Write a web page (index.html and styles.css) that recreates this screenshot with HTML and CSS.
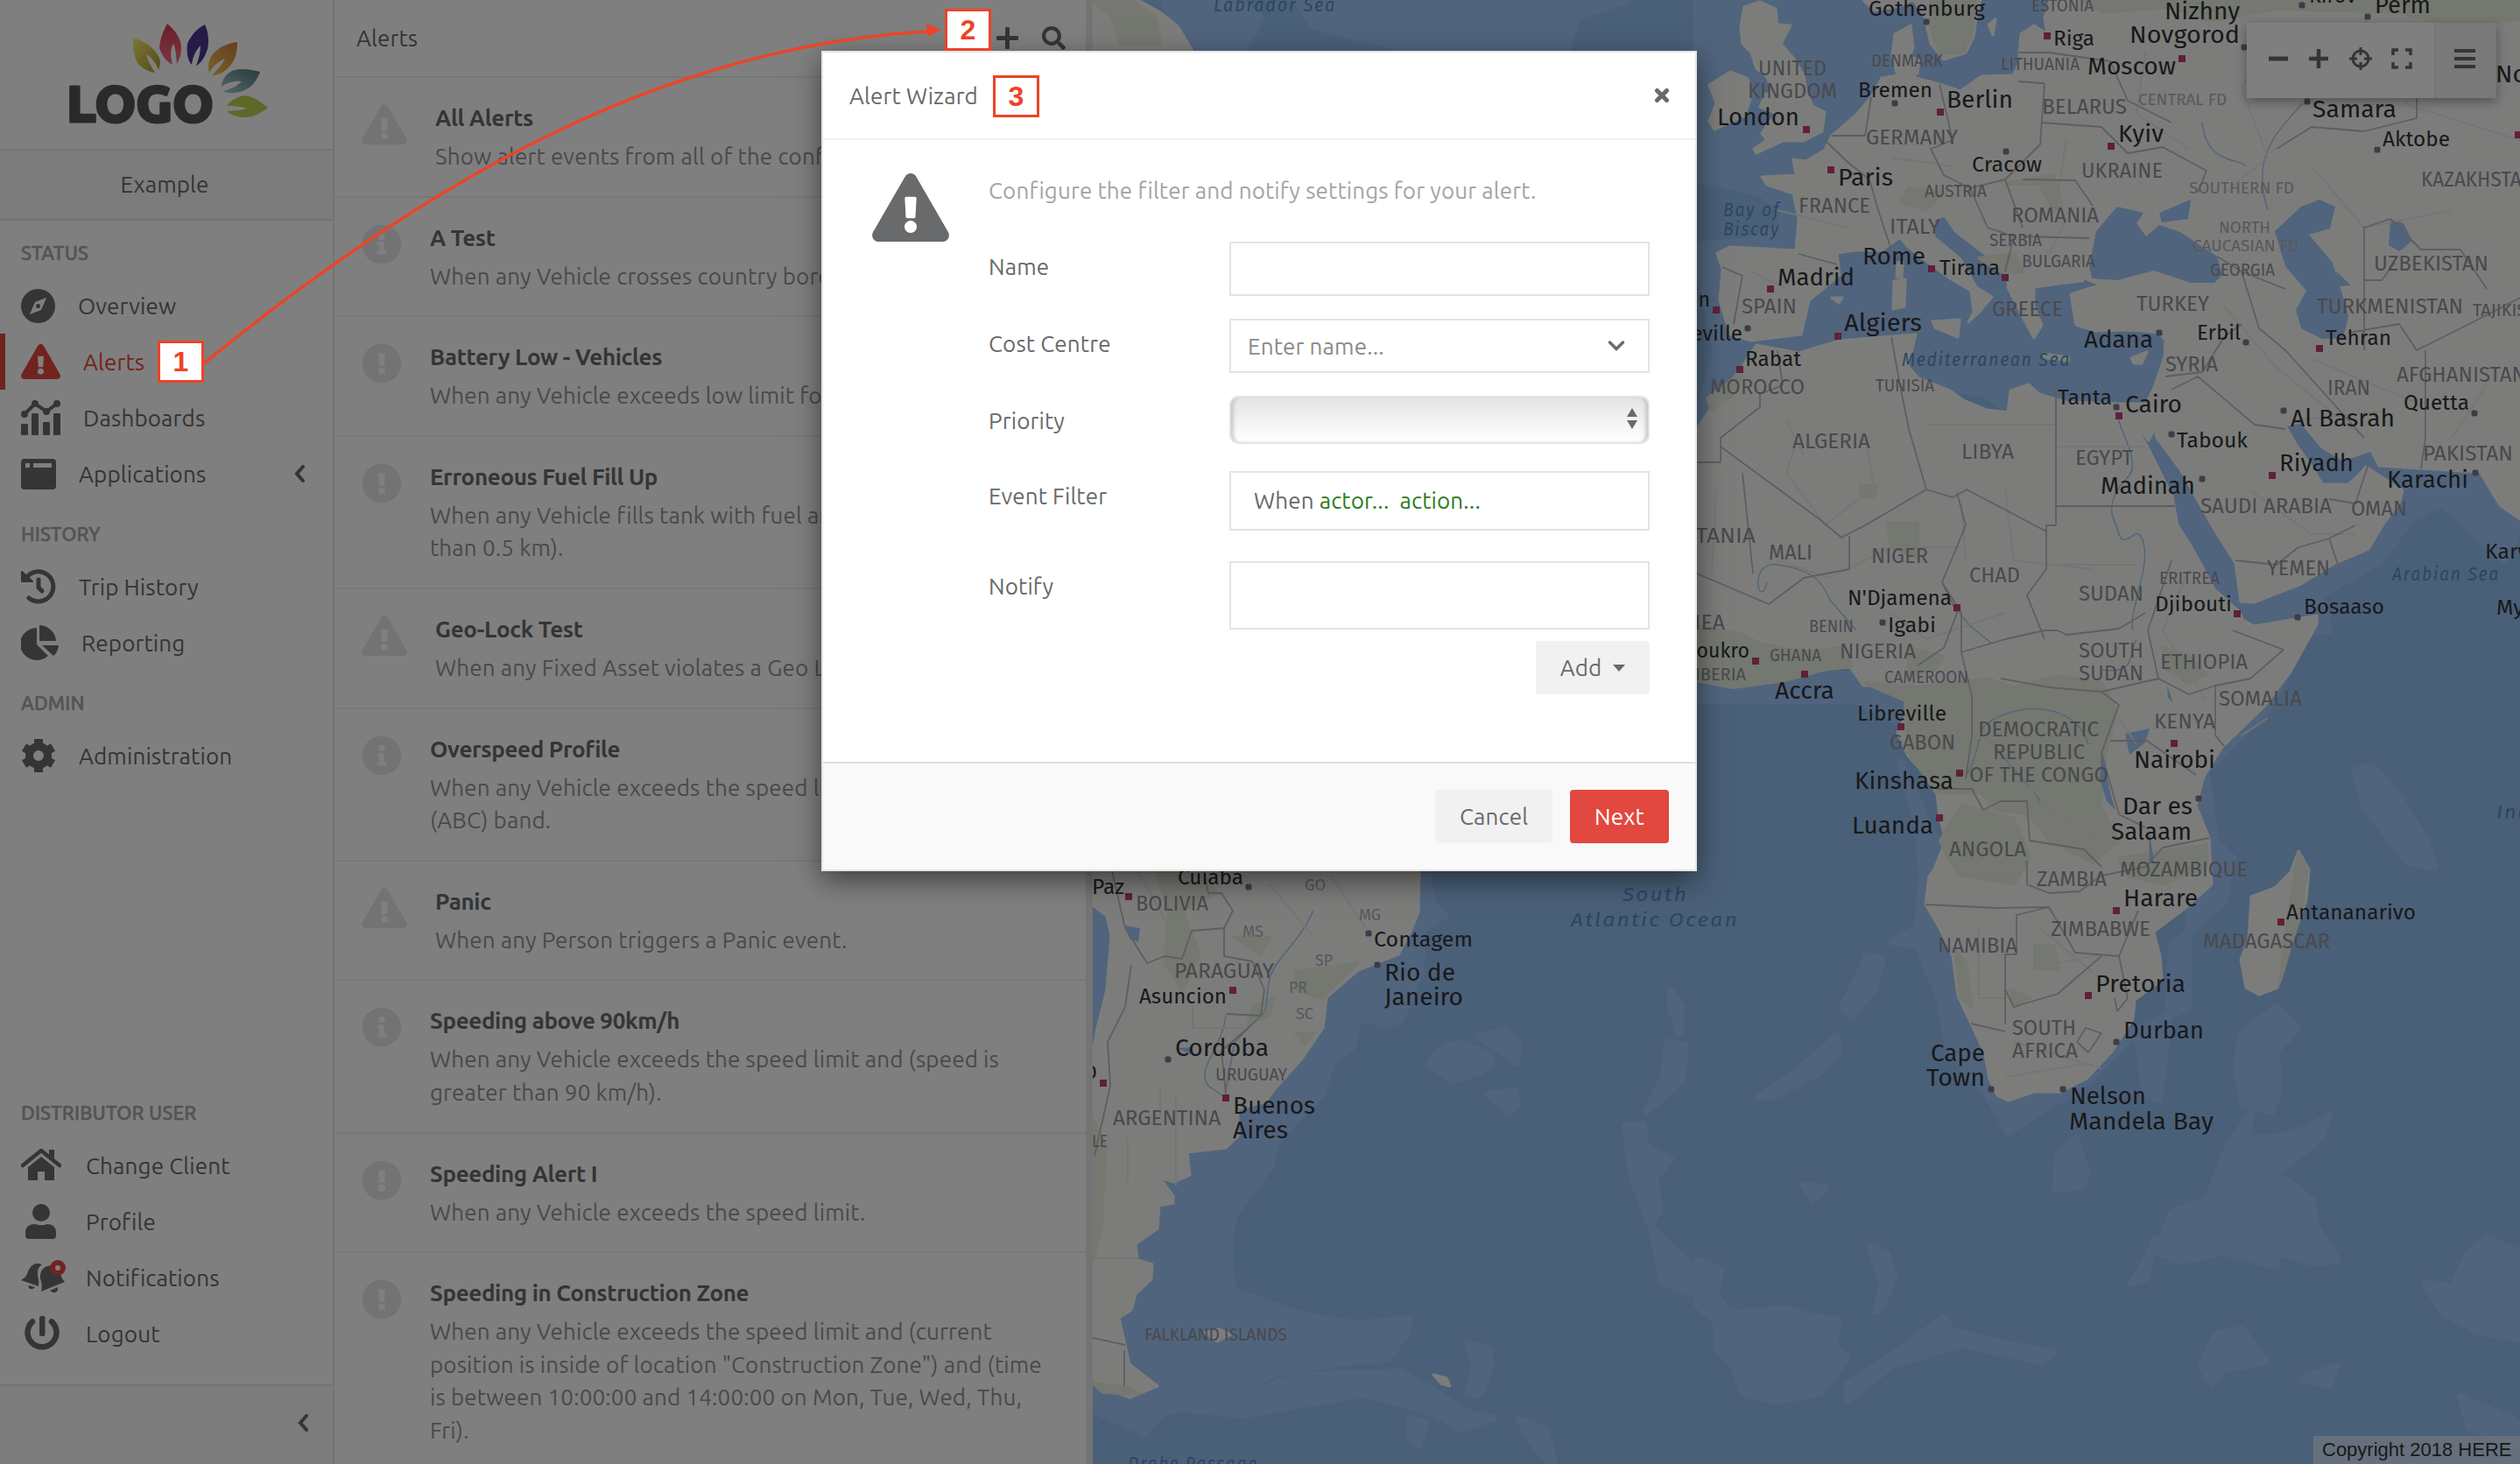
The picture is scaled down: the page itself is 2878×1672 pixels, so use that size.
FILE: index.html
```html
<!DOCTYPE html>
<html lang="en">
<head>
  <meta charset="UTF-8">
  <meta name="viewport" content="width=device-width, initial-scale=1.0">
  <title>Alerts</title>
  <link rel="stylesheet" href="styles.css">
</head>
<body>
  <svg class="sprite">
    <symbol id="i-warn" viewBox="0 0 576 512"><path d="M569.517 440.013C587.975 472.007 564.806 512 527.94 512H48.054c-36.937 0-59.999-40.055-41.577-71.987L246.423 23.985c18.467-32.009 64.72-31.951 83.154 0l239.94 416.028zM288 354c-25.405 0-46 20.595-46 46s20.595 46 46 46 46-20.595 46-46-20.595-46-46-46zm-43.673-165.346l7.418 136c.347 6.364 5.609 11.346 11.982 11.346h48.546c6.373 0 11.635-4.982 11.982-11.346l7.418-136c.375-6.874-5.098-12.654-11.982-12.654h-63.383c-6.884 0-12.356 5.78-11.981 12.654z"/></symbol>
    <symbol id="i-info" viewBox="0 0 512 512"><path d="M256 8C119.043 8 8 119.083 8 256c0 136.997 111.043 248 248 248s248-111.003 248-248C504 119.083 392.957 8 256 8zm0 110c23.196 0 42 18.804 42 42s-18.804 42-42 42-42-18.804-42-42 18.804-42 42-42zm56 254c0 6.627-5.373 12-12 12h-88c-6.627 0-12-5.373-12-12v-24c0-6.627 5.373-12 12-12h12v-64h-12c-6.627 0-12-5.373-12-12v-24c0-6.627 5.373-12 12-12h64c6.627 0 12 5.373 12 12v100h12c6.627 0 12 5.373 12 12v24z"/></symbol>
    <symbol id="i-excl" viewBox="0 0 512 512"><path d="M504 256c0 136.997-111.043 248-248 248S8 392.997 8 256C8 119.083 119.043 8 256 8s248 111.083 248 248zm-248 50c-25.405 0-46 20.595-46 46s20.595 46 46 46 46-20.595 46-46-20.595-46-46-46zm-43.673-165.346l7.418 136c.347 6.364 5.609 11.346 11.982 11.346h48.546c6.373 0 11.635-4.982 11.982-11.346l7.418-136c.375-6.874-5.098-12.654-11.982-12.654h-63.383c-6.884 0-12.356 5.78-11.981 12.654z"/></symbol>
    <symbol id="i-search" viewBox="0 0 512 512"><path d="M505 442.7L405.3 343c-4.5-4.5-10.6-7-17-7H372c27.6-35.3 44-79.7 44-128C416 93.1 322.9 0 208 0S0 93.1 0 208s93.1 208 208 208c48.3 0 92.7-16.4 128-44v16.3c0 6.4 2.5 12.5 7 17l99.7 99.7c9.4 9.4 24.6 9.4 33.9 0l28.3-28.3c9.4-9.4 9.4-24.6.1-34zM208 336c-70.7 0-128-57.2-128-128 0-70.7 57.2-128 128-128 70.7 0 128 57.2 128 128 0 70.7-57.2 128-128 128z"/></symbol>
    <symbol id="i-left" viewBox="0 0 12 20"><path d="M10 2 L3 10 L10 18" fill="none" stroke="currentColor" stroke-width="4" stroke-linecap="round"/></symbol>
  </svg>

  <div class="app">
    <nav class="sidebar">
      <div class="logo">
        <svg width="380" height="170" viewBox="0 0 380 170">
          <defs>
            <linearGradient id="g1" x2="1" y2="1"><stop offset="0" stop-color="#fbee72"/><stop offset="1" stop-color="#a3982c"/></linearGradient>
            <linearGradient id="g2" x2="0" y2="1"><stop offset="0" stop-color="#d43c4c"/><stop offset="1" stop-color="#fa6c8a"/></linearGradient>
            <linearGradient id="g4" x1="1" x2="0" y2="1"><stop offset="0" stop-color="#d07a3c"/><stop offset="1" stop-color="#e6c850"/></linearGradient>
            <linearGradient id="g5" x1="1" x2="0" y2="1"><stop offset="0" stop-color="#547474"/><stop offset="1" stop-color="#a4ccd6"/></linearGradient>
          </defs>
          <path fill="url(#g1)" d="M152 43C170 48 184 62 183 73L181 80C178 72 172 64 167 62C169 70 173 77 177 83C168 82 158 75 156 70C152 60 152 50 152 43Z"/>
          <path fill="url(#g2)" d="M191 27C202 36 207 46 207 55C207 62 205 68 202 73C201 64 201 56 198 50C194 57 195 66 197 74C189 70 184 62 182 54C183 44 187 34 191 27Z"/>
          <path fill="#4c368c" d="M234 28C238 36 239 48 237 56C234 65 230 72 224 75C227 67 229 60 229 52C223 58 220 66 219 74C214 68 213 60 214 50C218 40 226 32 234 28Z"/>
          <path fill="url(#g4)" d="M271 48C271 58 269 66 266 71C258 82 250 86 242 86C249 79 254 74 257 67C249 70 243 76 239 83C237 76 238 68 243 62C251 53 261 49 271 48Z"/>
          <path fill="url(#g5)" d="M297 82C294 90 289 98 283 101C275 106 264 108 254 104C264 102 271 98 276 93C267 92 259 95 253 99C253 92 257 85 265 81C276 77 288 80 297 82Z"/>
          <path fill="#bcd052" d="M306 123C298 129 289 134 280 134C271 134 264 131 259 127C268 126 276 126 282 124C275 121 267 121 259 121C263 115 271 110 280 109C290 110 299 117 306 123Z"/>
          <text class="logo-text" x="76" y="139" textLength="168" lengthAdjust="spacingAndGlyphs">LOGO</text>
        </svg>
      </div>
      <div class="client">Example</div>
      <div class="nav-label">STATUS</div>
      <a class="nav-item"><svg width="39" height="39" viewBox="0 0 39 39"><path fill-rule="evenodd" d="M19.500 0a19.500 19.500 0 1 0 .01 0ZM29 10 23 24 10 29 16 15Z"/><circle cx="19.500" cy="19.500" r="2.500"/></svg>Overview</a>
      <a class="nav-item active"><svg width="45" height="40"><use href="#i-warn"/></svg>Alerts</a>
      <a class="nav-item"><svg width="45" height="40" viewBox="0 0 45 40"><rect y="27" width="8" height="13" rx="1"/><rect x="12" y="15" width="8" height="25" rx="1"/><rect x="25" y="25" width="8" height="15" rx="1"/><rect x="37" y="15" width="8" height="25" rx="1"/><path d="M4 16 16 4 29 13 41 4" fill="none" stroke="currentColor" stroke-width="4"/><circle cx="4" cy="16" r="4"/><circle cx="16" cy="4" r="4"/><circle cx="29" cy="13" r="4"/><circle cx="41" cy="4" r="4"/></svg>Dashboards</a>
      <a class="nav-item"><svg width="40" height="35" viewBox="0 0 40 35"><path fill-rule="evenodd" d="M4 0H36Q40 0 40 4V31Q40 35 36 35H4Q0 35 0 31V4Q0 0 4 0ZM5 5V10H10V5ZM14 5V10H35V5Z"/></svg>Applications<svg class="chev" width="12" height="20"><use href="#i-left"/></svg></a>
      <div class="nav-label">HISTORY</div>
      <a class="nav-item"><svg width="40" height="40" viewBox="0 0 40 40"><path d="M6 10A17 17 0 1 1 9 33" fill="none" stroke="currentColor" stroke-width="5" stroke-linecap="round"/><path d="M1 3V14H13Z" stroke="currentColor" stroke-width="2" stroke-linejoin="round"/><path d="M20 12V21L24 25" fill="none" stroke="currentColor" stroke-width="5" stroke-linecap="round"/></svg>Trip History</a>
      <a class="nav-item"><svg width="43" height="40" viewBox="0 0 43 40"><path d="M18 3V22L31 35A19 18.500 0 1 1 18 3ZM21 0A20 19 0 0 1 40 18H21ZM24 23H43Q42 31 37 35Z"/></svg>Reporting</a>
      <div class="nav-label">ADMIN</div>
      <a class="nav-item"><svg width="40" height="40" viewBox="0 0 40 40"><circle cx="20" cy="20" r="10.500" fill="none" stroke="currentColor" stroke-width="9"/><g stroke="currentColor" stroke-width="10"><path d="M20 1V8M20 32V39M3.500 10.500 9.500 14M30.500 26 36.500 29.500M3.500 29.500 9.500 26M30.500 14 36.500 10.500"/></g></svg>Administration</a>

      <div class="nav-bottom">
        <div class="nav-label">DISTRIBUTOR USER</div>
        <a class="nav-item wide"><svg width="46" height="38" viewBox="0 0 46 38"><path d="M2 19 23 2 44 19" fill="none" stroke="currentColor" stroke-width="4.500" stroke-linecap="round"/><path d="M32 1H38V12L32 7ZM23 9 38 21V36H27V26H19V36H8V21Z"/></svg>Change Client</a>
        <a class="nav-item wide"><svg width="46" height="40" viewBox="0 0 46 40"><circle cx="23" cy="10" r="10"/><path d="M5 36V33Q5 23 16 23 23 25.500 30 23 40 23 40 33V36Q40 40 36 40H9Q5 40 5 36Z"/></svg>Profile</a>
        <a class="nav-item wide"><svg class="bells" width="52" height="40" viewBox="0 0 52 40"><path d="M8 13Q13 1 24 5 18 9 19 17 21 24 20 30L0 23Q7 19 8 13ZM23 36Q25 29 22 21 21 7 36 6 46 9 45 16 46 21 50 25ZM8 29 16 31Q13 35 9 32ZM33 35 42 31Q43 38 36 37Z"/><circle cx="42" cy="9" r="6" fill="#fff" stroke="#e2483f" stroke-width="6"/></svg>Notifications</a>
        <a class="nav-item wide"><svg width="46" height="40" viewBox="0 0 46 40"><path d="M13 6.500A16.500 16.500 0 1 0 35 6.500" fill="none" stroke="currentColor" stroke-width="6.500" stroke-linecap="round"/><rect x="21" y="0" width="6.500" height="23" rx="2"/></svg>Logout</a>
      </div>
      <div class="collapse"><svg width="12" height="20"><use href="#i-left"/></svg></div>
    </nav>

    <section class="panel">
      <header class="panel-head">
        <span>Alerts</span>
        <svg class="plus" width="25" height="25" viewBox="0 0 25 25"><path d="M12.500 2V23M2 12.500H23" stroke="currentColor" stroke-width="5" stroke-linecap="round"/></svg>
        <svg width="27" height="27"><use href="#i-search"/></svg>
      </header>
      <article class="alert"><svg width="52" height="46"><use href="#i-warn"/></svg><div><h3>All Alerts</h3><p>Show alert events from all of the configured alerts.</p></div></article>
      <article class="alert"><svg width="46" height="46"><use href="#i-info"/></svg><div><h3>A Test</h3><p>When any Vehicle crosses country borders.</p></div></article>
      <article class="alert"><svg width="46" height="46"><use href="#i-excl"/></svg><div><h3>Battery Low - Vehicles</h3><p>When any Vehicle exceeds low limit for battery.</p></div></article>
      <article class="alert"><svg width="46" height="46"><use href="#i-excl"/></svg><div><h3>Erroneous Fuel Fill Up</h3><p>When any Vehicle fills tank with fuel and (distance<br>than 0.5 km).</p></div></article>
      <article class="alert"><svg width="52" height="46"><use href="#i-warn"/></svg><div><h3>Geo-Lock Test</h3><p>When any Fixed Asset violates a Geo Lock.</p></div></article>
      <article class="alert"><svg width="46" height="46"><use href="#i-info"/></svg><div><h3>Overspeed Profile</h3><p>When any Vehicle exceeds the speed limit profile<br>(ABC) band.</p></div></article>
      <article class="alert"><svg width="52" height="46"><use href="#i-warn"/></svg><div><h3>Panic</h3><p>When any Person triggers a Panic event.</p></div></article>
      <article class="alert"><svg width="46" height="46"><use href="#i-info"/></svg><div><h3>Speeding above 90km/h</h3><p>When any Vehicle exceeds the speed limit and (speed is<br>greater than 90 km/h).</p></div></article>
      <article class="alert"><svg width="46" height="46"><use href="#i-excl"/></svg><div><h3>Speeding Alert I</h3><p>When any Vehicle exceeds the speed limit.</p></div></article>
      <article class="alert"><svg width="46" height="46"><use href="#i-excl"/></svg><div><h3>Speeding in Construction Zone</h3><p>When any Vehicle exceeds the speed limit and (current<br>position is inside of location "Construction Zone") and (time<br>is between 10:00:00 and 14:00:00 on Mon, Tue, Wed, Thu,<br>Fri).</p></div></article>
    </section>
    <div class="splitter"></div>

    <main class="map">
      <svg class="map-svg" id="map" width="1630" height="1672" viewBox="1248 0 1630 1672">
        <!-- shallow water -->
        <g class="shelf">
          <path d="M1330 0H1410L1440 20 1420 58H1340ZM1480 0H1860L1800 20 1790 58H1610L1500 30ZM1938 0H2420V470L2200 440 1938 480 1960 400 1945 330 1938 280 1990 276 2030 262 2038 240 2010 220 1938 205Z"/>
          <path d="M2240 430 2300 475H2400L2480 460V330H2380L2300 360Z"/>
          <path d="M2430 470 2620 470 2720 510 2840 530 2878 600 2860 640 2790 575 2755 590 2720 640 2650 680 2660 720 2560 730 2500 620Z"/>
          <path d="M1247 1020H1290V1220H1247ZM1610 995H1630L1636 1030 1650 1046 1625 1062 1622 1110 1600 1165 1580 1170 1560 1163 1550 1170 1545 1195 1520 1215 1510 1250 1470 1290 1456 1310 1452 1330 1410 1388 1404 1410 1404 1450 1410 1475 1440 1485 1480 1500 1520 1508 1550 1512 1610 1506 1608 1520 1585 1552 1540 1555 1460 1568 1430 1580 1440 1586 1480 1572 1510 1570 1600 1567 1640 1590 1680 1615 1705 1620 1670 1632 1640 1615 1560 1592 1440 1612 1420 1616 1345 1608 1325 1615 1308 1637 1248 1610V1350L1300 1180Z"/>
          <path d="M1632 1216Q1640 1196 1668 1192L1700 1204 1705 1216 1690 1224 1660 1234ZM1690 1184 1720 1178 1734 1192 1732 1214ZM1700 1250 1730 1246 1733 1260 1724 1270ZM1676 1535 1700 1540 1702 1560 1690 1592H1676L1684 1560ZM1735 1622 1765 1632 1775 1672H1770L1752 1650ZM1610 1620 1628 1626 1620 1650 1610 1640ZM1856 1286 1876 1284 1880 1310 1908 1324 1890 1345 1895 1380 1885 1400 1915 1430 1938 1450V1480L1900 1465 1885 1400 1864 1345ZM1905 1190 1925 1195 1920 1235 1880 1270 1900 1230ZM1908 1130 1920 1150 1918 1180 1908 1150Z"/>
          <path d="M1938 1440 1965 1450 1960 1480 1975 1500 2040 1495 2070 1504 2100 1508 2095 1540 2110 1550 2080 1590 2030 1600 1990 1590 1980 1560 1960 1540V1510L1938 1490ZM2110 1580 2160 1548 2220 1505 2230 1520 2290 1535 2345 1545 2330 1555 2240 1535 2160 1560 2110 1600ZM2136 1424 2155 1432 2163 1460 2150 1490 2142 1498 2150 1468ZM2132 1092 2150 1096 2140 1130 2115 1160 2104 1150 2120 1120ZM2060 1354 2085 1356 2070 1370ZM2008 1254 2050 1225 2098 1184 2100 1200 2080 1224 2030 1250Z"/>
          <path d="M2200 840 2160 820 2120 800 1950 800 1938 800V770H2200ZM2170 870 2190 940 2195 1000 2190 1060 2160 1075 2190 1080 2215 1140 2226 1200 2270 1250 2293 1293 2330 1270 2380 1240 2440 1180 2450 1250 2466 1256 2476 1170 2480 1080 2540 1030 2550 980 2530 960 2520 880 2590 810 2650 700H2640L2550 720H2500V1150L2290 1240 2230 1000Z"/>
          <path d="M2370 1300 2384 1340 2378 1355 2348 1358 2350 1320ZM2560 1180 2600 1150 2624 1175 2600 1200 2602 1250 2594 1270 2562 1260 2554 1220ZM2572 1270 2565 1300 2595 1300 2630 1290 2660 1275 2650 1300 2600 1340 2640 1370 2645 1400 2670 1440 2640 1442 2600 1430 2600 1446 2540 1430 2490 1440 2464 1430 2480 1385 2520 1370 2545 1310ZM2450 1440 2462 1415 2450 1460 2434 1466ZM2530 1525 2560 1518 2588 1555 2540 1564 2526 1580 2514 1560ZM2770 1465 2800 1470 2820 1430 2840 1415 2878 1430V1530L2830 1520 2790 1500ZM2810 1595 2878 1625V1650L2820 1630ZM2630 1575 2668 1560 2660 1582ZM2690 880 2710 875 2740 910 2770 960 2780 990 2750 985 2700 920Z"/>
        </g>
        <!-- land -->
        <g class="land">
          <path d="M1248 0H1300L1325 14 1345 30 1362 58H1248Z"/>
          <path d="M2128 0 2140 12 2165 8 2185 0 2198 18 2205 50 2220 68 2245 60 2254 42 2257 20 2262 0Z"/>
          <path d="M1992 8 2010 2 2028 10 2030 28 2045 29 2034 50 2048 66 2060 86 2063 104 2070 121 2084 128 2081 150 2060 161 2036 161 2006 175 2003 170 2018 160 2012 152 2020 140 2030 130 2010 122 2016 108 2024 104 2018 88 2006 78 2000 60 1990 50 1988 30Z"/>
          <path d="M1952 97 1976 82 1996 90 2000 110 1993 132 1958 148 1952 138 1960 118Z"/>
          <path d="M2341 0 2335 21 2338 39 2323 29 2308 39 2305 75 2299 86 2263 87 2239 104 2215 96 2188 89 2179 71 2185 54 2182 29 2164 39 2161 64 2167 86 2149 89 2137 111 2119 132 2092 155 2084 171 2063 184 2048 182 2051 200 2012 202 2018 211 2048 221 2054 250 2051 286 1976 282 1961 289 1967 307 1964 343 1976 382 2000 389 2057 382 2066 343 2101 314 2098 289 2119 286 2149 286 2170 271 2179 282 2197 296 2227 318 2251 332 2254 357 2248 368 2260 357 2275 339 2257 328 2239 296 2209 271 2209 250 2221 246 2233 264 2275 296 2293 314 2293 328 2311 364 2323 386 2332 371 2323 350 2323 328 2359 323 2385 320 2400 325 2365 336 2371 371 2394 378 2436 377 2466 380 2473 389 2472 407 2460 443 2451 461 2418 461 2359 459 2329 450 2317 439 2296 446 2293 471 2269 468 2242 457 2227 446 2191 432 2179 418 2188 382 2101 389 2054 403 2006 394 1988 421 1958 461 1938 489V777L1979 785 2039 777 2081 765 2113 762 2128 783 2161 782 2176 793 2176 817 2167 837 2179 863 2197 883 2212 907 2215 933 2222 960 2209 993 2203 1001 2199 1033 2215 1060 2230 1092 2236 1137 2251 1169 2266 1201 2272 1232 2281 1251 2293 1257 2323 1247 2353 1247 2383 1232 2412 1201 2436 1164 2438 1142 2469 1119 2467 1092 2460 1064 2496 1037 2526 1010 2523 957 2508 920 2517 887 2538 853 2586 807 2616 767 2646 713 2646 703 2574 715 2562 708 2556 697 2529 673 2502 623 2487 600 2481 567 2454 513 2435 478 2454 503 2461 489 2463 500 2490 536 2505 563 2532 610 2553 643 2559 687 2574 688 2628 667 2667 643 2705 627 2723 597 2741 573 2744 560 2702 533 2693 543 2682 553 2652 553 2643 537 2622 507 2610 486 2628 482 2652 511 2676 525 2708 514 2717 532 2825 539 2831 537 2855 577 2878 593V0Z"/>
          <path d="M2625 972 2637 993 2634 1028 2616 1078 2601 1128 2580 1136 2565 1128 2559 1096 2568 1073 2571 1024 2598 1014 2616 996Z"/>
          <path d="M2163 321 2176 319 2175 350 2162 353ZM2167 300 2173 299 2172 317 2166 316ZM2207 367 2238 365 2236 385 2210 374ZM2333 404 2363 408 2362 412 2335 409ZM2434 409 2452 402 2446 415 2437 415ZM2092 340 2104 340 2100 346ZM2176 64 2192 68 2190 84 2178 80ZM2271 28 2279 22 2276 40Z"/>
          <path d="M1247 995H1621L1620 1042 1611 1064 1597 1090 1551 1108 1515 1139 1511 1174 1487 1209 1455 1245 1446 1258 1414 1267 1414 1298 1400 1311 1356 1316 1359 1342 1340 1350 1324 1344 1340 1366 1340 1374 1324 1377 1322 1403 1297 1421 1299 1439 1316 1444 1315 1461 1297 1478 1292 1496 1278 1505 1285 1536 1290 1558 1322 1583 1290 1596 1247 1580V1209L1253 1174 1264 1130 1269 1068 1264 1046 1247 1033Z"/>
          <path d="M1376 1522 1392 1518 1406 1524 1390 1532ZM1637 1570 1652 1574 1656 1583 1646 1580Z"/>
        </g>
        <!-- woodland -->
        <g class="wood">
          <path d="M1248 0H1290L1320 20 1325 50H1280L1270 20ZM2205 0H2255L2252 40 2240 60 2215 60 2205 30ZM2380 0H2878V22L2800 30 2740 14 2600 10 2520 24 2480 8 2400 14Z"/>
          <path d="M1938 715 1990 725 2010 735 2060 745 2100 740 2116 760 2081 765 2039 777 1979 785 1938 777ZM2130 780 2190 785 2270 775 2300 785 2350 772 2400 780 2417 810 2405 860 2398 920 2420 960 2390 985 2340 960 2318 930 2280 925 2262 905 2212 905 2180 860 2176 800ZM2216 960 2240 920 2300 935 2318 980 2300 1010 2240 1000 2225 980ZM2180 740 2220 750 2210 765 2180 770ZM2470 740 2500 750 2520 770 2500 780 2475 765ZM2156 597H2190V636L2160 625ZM2124 555 2144 555 2140 567 2126 567ZM2324 1080H2345L2352 1107H2324ZM2233 1085 2245 1100 2252 1150 2240 1140ZM2296 1130 2318 1140 2300 1150ZM2420 980 2520 965 2520 990 2470 1010 2430 1000ZM2625 975 2635 993 2625 1050 2604 1120 2616 1030Z"/>
          <path d="M1320 995H1370L1390 1020 1350 1040 1370 1090 1350 1130 1330 1100 1335 1040ZM1410 1070 1450 1070 1440 1090ZM1480 1110 1550 1100 1510 1140 1480 1130ZM1430 1150 1454 1140 1450 1160 1425 1170ZM1480 1180 1500 1180 1490 1192ZM1250 1280 1262 1310 1258 1400 1248 1440ZM1248 1580 1290 1585 1300 1592 1260 1590ZM2290 210 2345 200 2355 235 2345 240 2330 210ZM2180 215 2220 220 2200 240 2170 230ZM2260 295 2300 290 2310 310 2290 312ZM1950 455 1990 425 1980 450 1955 468Z"/>
        </g>
        <!-- inland water -->
        <g class="lake">
          <path d="M2418 236 2448 243 2440 255 2451 270 2466 257 2490 265 2532 293 2538 314 2529 323 2502 323 2460 309 2418 320 2389 318 2386 304 2394 264ZM2466 243 2502 228 2499 250 2469 254Z"/>
          <path d="M2649 228 2667 236 2661 261 2637 268 2664 300 2673 329 2682 361 2676 386 2652 387 2628 375 2622 354 2634 332 2610 304 2598 264 2628 236Z"/>
          <path d="M2730 250 2745 255 2755 275 2740 287 2728 280ZM2668 310 2685 326 2670 327ZM2427 838 2455 832 2450 848 2432 862ZM2400 860 2410 905 2416 925 2406 915 2398 890ZM2475 783 2482 803 2476 797ZM2454 945 2460 985 2455 985ZM1285 1057 1302 1060 1300 1076 1290 1072ZM1345 1197 1362 1196 1360 1204Z"/>
          <path class="river" d="M2417 600C2405 580 2415 560 2430 545S2425 500 2418 475M2417 600C2425 640 2440 590 2448 620S2430 700 2436 720M2590 240C2570 180 2600 150 2630 118M2515 140C2520 190 2560 180 2565 190M2018 665C2010 700 1995 640 2030 645S2080 660 2090 685L2120 720M2230 690 2250 715 2275 735M2265 830C2300 800 2370 800 2385 850M2265 830C2255 860 2255 875 2245 885M2280 855C2300 880 2320 900 2330 915M1448 1130 1445 1155 1410 1190 1400 1245M1448 1130C1450 1095 1480 1085 1500 1040M1400 1160C1395 1200 1365 1220 1380 1240L1400 1254M2440 730C2430 750 2440 770 2400 765"/>
        </g>
        <g class="region">
          <path d="M2050 510 2040 540 2085 600 2140 555 2130 500M2040 480 2060 520M2200 485H2348M2240 575 2245 640M2290 560 2300 640 2390 650M2350 645H2440M2350 510H2450M2570 560 2640 610 2690 610M2620 480 2720 470M2030 640 2090 660 2160 625 2240 625M1960 560 1955 655M2160 700 2200 730 2290 700M2200 825 2290 850 2330 920 2400 960M2310 1000 2240 1000M2260 1060V1140H2290M2350 1100 2400 1090M2420 820 2440 850M2500 650 2470 720 2520 800M2590 820 2560 840M2330 1060 2390 1110M2300 1190 2400 1220M2290 1230 2380 1215M1300 995 1330 1050M1362 1150V1174H1420M1325 1240V1275M1343 1250V1354M1288 1300V1350M1250 1437H1300M1450 1010 1500 1070M1520 1000 1560 1060M2240 30 2245 60M2600 40 2560 100 2590 180 2540 220M2450 60 2440 130 2500 170M2640 190 2700 260 2800 240M2700 20 2750 120 2878 160M2160 180 2230 190M2000 310 2040 330M2030 240 2110 260M2360 160 2350 220M2360 250 2340 290M2540 350 2600 420 2700 500M2640 410 2760 460M2840 440 2800 500"/>
        </g>
        <g class="border">
          <path d="M1938 528H1965V500L2010 465V450L2036 440 2030 400M1965 510 2078 593 2103 614 2130 600 2200 559 2180 490 2170 440 2160 385M2200 559 2230 568 2246 559 2337 607V600H2348V430M2348 578H2484M2337 607V650L2315 680 2335 730M2235 563 2245 600 2218 665 2240 700 2240 745 2290 730 2335 720 2350 720 2360 725 2420 718 2450 700M2112 612V650L2060 660 2020 690 1938 655M1990 540 2002 655M2218 665 2235 700 2220 740 2190 760M2240 745 2252 795V840L2245 890M2285 775 2340 785 2400 790 2465 775 2453 720 2480 640M2465 775 2500 793 2530 783 2570 775 2608 742 2550 720M2530 783V840L2540 852M2400 790 2420 805 2400 860 2420 930 2450 945M2410 846H2452L2508 885M2212 901H2252L2265 925 2285 915H2315L2318 960 2380 970 2400 990M2315 983V1010L2340 1020 2375 1018 2400 1000 2450 990 2470 968 2523 957M2199 1033 2280 1037 2340 1036 2370 1088 2420 1092 2442 1040M2290 1170V1090H2303V1045L2340 1036M2251 1169 2290 1178M2290 1130 2300 1150 2350 1135 2400 1092M2420 1092 2430 1140 2418 1155 2415 1140M2372 1190 2382 1174 2400 1180 2385 1202 2372 1190"/>
          <path d="M2084 160 2110 185 2135 205 2145 240 2160 285M2092 155 2130 155 2137 111M2215 96 2230 160 2205 170 2220 200 2250 215 2290 205 2330 165 2335 95M2332 140 2400 145 2430 175 2470 168 2520 195 2510 220M2340 60 2410 70 2430 115 2480 140M2340 60 2305 60M2334 95 2305 93M2250 215 2270 260 2300 270 2290 310M2310 205 2370 206 2390 235M2310 270 2386 272M2290 205 2310 260M2054 290 2098 302M1967 305 1990 315 1980 370M2390 325 2380 320M2532 293 2560 310 2610 330M2560 310 2580 375 2610 400 2700 500M2473 430 2515 425 2540 385 2560 370M2480 445 2510 430 2575 485 2610 490M2700 400V320H2720L2735 300M2600 170 2640 145 2700 150 2760 135 2760 70 2820 110M2700 320V260L2730 250 2765 285H2810L2840 330M2682 380 2740 370 2760 400 2820 370 2878 340M2770 400 2770 500 2765 535M2660 570 2690 575 2705 530M2553 640 2600 645 2625 625 2660 615 2690 600M2660 615 2670 645M1270 995 1285 1060 1310 1100 1330 1092 1350 1095 1361 1063 1398 1060 1408 1040 1395 1020 1380 1020 1375 995M1398 1060V1092L1430 1098 1444 1130 1440 1160 1400 1158M1292 1102 1285 1150 1265 1190 1268 1240 1250 1320M1430 1170 1395 1200 1400 1250M1248 1528 1285 1536M1284 1542V1583"/>
        </g>
      </svg>
      <div class="toolbar">
        <div class="tools">
          <svg width="24" height="24" viewBox="0 0 24 24"><path d="M1 12H23" stroke="currentColor" stroke-width="5"/></svg>
          <svg width="24" height="24" viewBox="0 0 24 24"><path d="M1 12H23M12 1V23" stroke="currentColor" stroke-width="4.500"/></svg>
          <svg width="26" height="26" viewBox="0 0 26 26"><circle cx="13" cy="13" r="9" fill="none" stroke="currentColor" stroke-width="3"/><path d="M13 0V9M13 17V26M0 13H9M17 13H26" stroke="currentColor" stroke-width="3"/></svg>
          <svg width="24" height="24" viewBox="0 0 24 24"><path d="M2 8V2H8M16 2H22V8M22 16V22H16M8 22H2V16" fill="none" stroke="currentColor" stroke-width="3.500"/></svg>
        </div>
        <div class="menu"><svg width="24" height="22" viewBox="0 0 24 22"><path d="M0 2H24M0 11H24M0 20H24" stroke="currentColor" stroke-width="4"/></svg></div>
      </div>
      <div class="copyright">Copyright 2018 HERE</div>
    </main>
  </div>

  <div class="backdrop"></div>

  <div class="modal">
    <header class="modal-head">
      <span>Alert Wizard</span>
      <svg width="18" height="18" viewBox="0 0 18 18"><path d="M3.500 3.500 14.500 14.500M14.500 3.500 3.500 14.500" stroke="currentColor" stroke-width="5" stroke-linecap="round"/></svg>
    </header>
    <div class="modal-body">
      <svg class="warn" width="88" height="78"><use href="#i-warn"/></svg>
      <form class="form">
        <p class="hint">Configure the filter and notify settings for your alert.</p>
        <div class="row name"><label>Name</label><div class="field"></div></div>
        <div class="row cost"><label>Cost Centre</label><div class="field">Enter name...<svg width="20" height="14" viewBox="0 0 20 14"><path d="M2.500 3 10 10.500 17.500 3" fill="none" stroke="currentColor" stroke-width="3.500" stroke-linecap="round"/></svg></div></div>
        <div class="row priority"><label>Priority</label><div class="field"><svg width="12" height="24" viewBox="0 0 12 24"><path d="M0 10 6 0 12 10ZM0 14H12L6 24Z"/></svg></div></div>
        <div class="row event"><label>Event Filter</label><div class="field"><span>When</span><b>actor...</b><b>action...</b></div></div>
        <div class="row notify"><label>Notify</label><div class="field"></div></div>
        <div class="btn add">Add<svg width="14" height="8" viewBox="0 0 14 8"><path d="M0 0H14L7 8Z"/></svg></div>
      </form>
    </div>
    <footer class="modal-foot">
      <div class="btn">Cancel</div>
      <div class="btn next">Next</div>
    </footer>
  </div>

  <svg class="arrow" width="1100" height="440" viewBox="0 0 1100 440">
    <path d="M233 415C490 205 760 52 1060 36" fill="none" stroke="#ec4427" stroke-width="3.500"/>
    <path d="M1058 27 1075 34 1059 42Z" fill="#ec4427"/>
  </svg>
  <div class="step step-1">1</div>
  <div class="step step-2">2</div>
  <div class="step step-3">3</div>

  <script>
    // [class, x, baseline, width, text]
    const labels = [
      ["sea", 1386, 13, 140, "Labrador Sea"], ["sea", 1968, 247, 65, "Bay of"], ["sea", 1968, 269, 65, "Biscay"],
      ["sea", 2172, 418, 193, "Mediterranean Sea"], ["sea", 2732, 663, 123, "Arabian Sea"], ["sea", 2851, 935, 80, "Indian"],
      ["sea", 1853, 1029, 75, "South"], ["sea", 1794, 1058, 192, "Atlantic Ocean"], ["sea", 1288, 1679, 149, "Drake Passage"],
      ["land-s", 2320, 13, 71, "ESTONIA"], ["land-s", 2137, 76, 82, "DENMARK"], ["land-s", 2285, 80, 90, "LITHUANIA"],
      ["land-l", 2008, 86, 78, "UNITED"], ["land-l", 1996, 112, 102, "KINGDOM"], ["land-l", 2332, 130, 97, "BELARUS"],
      ["area", 2442, 120, 101, "CENTRAL FD"], ["land-l", 2131, 165, 105, "GERMANY"], ["land-l", 2377, 203, 93, "UKRAINE"],
      ["land-s", 2198, 225, 71, "AUSTRIA"], ["land-l", 2054, 243, 82, "FRANCE"], ["area", 2500, 221, 120, "SOUTHERN FD"],
      ["land-l", 2297, 254, 100, "ROMANIA"], ["land-l", 2158, 267, 58, "ITALY"], ["land-s", 2272, 281, 60, "SERBIA"],
      ["land-s", 2309, 305, 84, "BULGARIA"], ["area", 2534, 266, 59, "NORTH"], ["area", 2504, 287, 121, "CAUCASIAN FD"],
      ["land-s", 2524, 315, 74, "GEORGIA"], ["land-l", 2711, 309, 131, "UZBEKISTAN"], ["land-l", 2765, 213, 130, "KAZAKHSTAN"],
      ["land-l", 1989, 358, 63, "SPAIN"], ["land-l", 2275, 361, 81, "GREECE"], ["land-l", 2440, 355, 83, "TURKEY"],
      ["land-l", 2646, 358, 167, "TURKMENISTAN"], ["land-s", 2824, 361, 95, "TAJIKISTAN"], ["land-l", 2473, 424, 60, "SYRIA"],
      ["land-l", 1953, 450, 108, "MOROCCO"], ["land-s", 2142, 447, 67, "TUNISIA"], ["land-l", 2658, 451, 49, "IRAN"],
      ["land-l", 2737, 436, 148, "AFGHANISTAN"], ["land-l", 2047, 512, 89, "ALGERIA"], ["land-l", 2240, 524, 60, "LIBYA"],
      ["land-l", 2370, 531, 66, "EGYPT"], ["land-l", 2767, 526, 103, "PAKISTAN"], ["land-l", 2513, 586, 150, "SAUDI ARABIA"],
      ["land-l", 2685, 589, 64, "OMAN"], ["land-l", 1860, 620, 145, "MAURITANIA"], ["land-l", 2020, 639, 50, "MALI"],
      ["land-l", 2137, 643, 65, "NIGER"], ["land-l", 2249, 665, 58, "CHAD"], ["land-l", 2374, 686, 74, "SUDAN"],
      ["land-s", 2466, 667, 69, "ERITREA"], ["land-l", 2589, 657, 72, "YEMEN"], ["land-l", 1886, 719, 84, "GUINEA"],
      ["land-s", 2066, 722, 51, "BENIN"], ["land-l", 2374, 751, 74, "SOUTH"], ["land-l", 2374, 777, 74, "SUDAN"],
      ["land-l", 2467, 764, 100, "ETHIOPIA"], ["land-s", 2021, 755, 59, "GHANA"], ["land-l", 2101, 752, 87, "NIGERIA"],
      ["land-s", 1926, 777, 68, "LIBERIA"], ["land-s", 2152, 780, 96, "CAMEROON"], ["land-l", 2534, 806, 95, "SOMALIA"],
      ["land-l", 2460, 832, 70, "KENYA"], ["land-l", 2158, 856, 75, "GABON"], ["land-l", 2259, 841, 138, "DEMOCRATIC"],
      ["land-l", 2276, 867, 105, "REPUBLIC"], ["land-l", 2249, 893, 159, "OF THE CONGO"], ["land-l", 2226, 978, 88, "ANGOLA"],
      ["land-l", 2326, 1012, 80, "ZAMBIA"], ["land-l", 2421, 1001, 146, "MOZAMBIQUE"], ["land-l", 2342, 1069, 114, "ZIMBABWE"],
      ["land-l", 2213, 1088, 91, "NAMIBIA"], ["land-l", 2516, 1083, 145, "MADAGASCAR"], ["land-l", 2298, 1182, 73, "SOUTH"],
      ["land-l", 2298, 1208, 75, "AFRICA"], ["area", 1490, 1017, 24, "GO"], ["land-l", 1297, 1040, 83, "BOLIVIA"],
      ["area", 1552, 1051, 25, "MG"], ["area", 1419, 1070, 24, "MS"], ["land-l", 1341, 1117, 114, "PARAGUAY"],
      ["area", 1502, 1103, 20, "SP"], ["area", 1472, 1134, 21, "PR"], ["area", 1480, 1164, 20, "SC"],
      ["land-s", 1388, 1234, 82, "URUGUAY"], ["land-l", 1271, 1285, 123, "ARGENTINA"],
      ["land-s", 1247, 1310, 18, "LE"], ["land-s", 1307, 1531, 163, "FALKLAND ISLANDS"],
      ["town", 2134, 18, 133, "Gothenburg"], ["town", 2345, 52, 47, "Riga"], ["city", 2472, 22, 86, "Nizhny"],
      ["city", 2432, 49, 126, "Novgorod"], ["city", 2384, 85, 101, "Moscow"], ["city", 2712, 15, 64, "Perm"],
      ["town", 2637, 3, 54, "Kirov"], ["city", 1961, 143, 94, "London"], ["city", 2223, 123, 76, "Berlin"],
      ["town", 2122, 111, 85, "Bremen"], ["city", 2641, 134, 96, "Samara"], ["town", 2721, 167, 77, "Aktobe"],
      ["city", 2419, 162, 52, "Kyiv"], ["town", 2252, 196, 80, "Cracow"], ["city", 2099, 212, 63, "Paris"],
      ["city", 2127, 302, 72, "Rome"], ["town", 2215, 314, 69, "Tirana"], ["city", 2030, 326, 88, "Madrid"],
      ["city", 2106, 378, 89, "Algiers"], ["city", 2380, 397, 79, "Adana"], ["town", 2509, 388, 50, "Erbil"],
      ["town", 2656, 394, 75, "Tehran"], ["town", 1883, 350, 70, "Lisbon"], ["town", 1918, 389, 72, "Seville"],
      ["town", 1993, 418, 64, "Rabat"], ["town", 2350, 462, 62, "Tanta"], ["city", 2427, 471, 65, "Cairo"],
      ["town", 2745, 468, 75, "Quetta"], ["city", 2616, 487, 119, "Al Basrah"], ["town", 2486, 511, 81, "Tabouk"],
      ["city", 2603, 538, 85, "Riyadh"], ["city", 2726, 557, 93, "Karachi"], ["city", 2399, 564, 108, "Madinah"],
      ["town", 2110, 691, 119, "N'Djamena"], ["town", 2838, 638, 78, "Karwar"], ["town", 2461, 698, 88, "Djibouti"],
      ["town", 2631, 701, 92, "Bosaaso"], ["town", 2851, 702, 80, "Mysore"], ["town", 2156, 722, 55, "Igabi"],
      ["town", 1846, 751, 152, "Yamoussoukro"], ["city", 2027, 798, 68, "Accra"], ["town", 2121, 823, 102, "Libreville"],
      ["city", 2437, 877, 93, "Nairobi"], ["city", 2118, 901, 113, "Kinshasa"], ["city", 2424, 930, 80, "Dar es"],
      ["city", 2411, 959, 92, "Salaam"], ["city", 2115, 952, 93, "Luanda"], ["city", 2425, 1035, 85, "Harare"],
      ["town", 2611, 1050, 148, "Antananarivo"], ["city", 2393, 1133, 103, "Pretoria"], ["city", 2425, 1186, 92, "Durban"],
      ["city", 2205, 1212, 62, "Cape"], ["city", 2200, 1240, 67, "Town"], ["city", 2364, 1261, 87, "Nelson"],
      ["city", 2363, 1290, 165, "Mandela Bay"], ["town", 1247, 1021, 37, "Paz"], ["town", 1345, 1010, 75, "Cuiaba"],
      ["town", 1569, 1081, 113, "Contagem"], ["city", 1581, 1120, 81, "Rio de"], ["city", 1581, 1148, 90, "Janeiro"],
      ["town", 1301, 1146, 100, "Asuncion"], ["city", 1342, 1206, 107, "Cordoba"],
      ["city", 1408, 1272, 94, "Buenos"], ["city", 1408, 1300, 63, "Aires"], ["city", 1239, 1232, 14, "o"],
      ["city", 2850, 94, 50, "Nov"]
    ];
    // capitals are red, other places grey
    const capitals = [[2338,41],[2492,67],[2063,148],[2216,128],[2411,167],[2091,194],[2206,307],[2290,317],[2022,330],[2099,384],[2649,398],[1960,354],[1987,422],[2420,475],[2595,543],[2235,694],[2555,701],[2005,755],[2061,770],[2171,830],[2483,849],[2238,883],[2215,934],[2417,1040],[2605,1053],[2385,1137],[1289,1024],[1408,1131],[1260,1237],[1400,1254],[2876,154]];
    const places = [[2200,25],[2704,19],[2629,6],[2563,54],[2164,118],[2635,116],[2715,171],[2291,173],[2466,380],[2565,391],[1996,375],[2417,465],[2826,472],[2608,469],[2480,496],[2827,540],[2515,547],[2624,705],[2150,711],[2511,912],[2417,1190],[2274,1244],[2356,1244],[1426,1013],[1563,1066],[1573,1102],[1334,1210]];
    const map = document.getElementById('map');

    function add(name, attrs, text) {
      const el = document.createElementNS('http://www.w3.org/2000/svg', name);
      for (const k in attrs) el.setAttribute(k, attrs[k]);
      if (text) el.textContent = text;
      map.appendChild(el);
    }
    capitals.forEach(([x, y]) => add('rect', { x: x - 4, y: y - 4, width: 8, height: 8, class: 'capital' }));
    places.forEach(([x, y]) => add('rect', { x: x - 3.5, y: y - 3.5, width: 7, height: 7, rx: 2, class: 'place' }));
    labels.forEach(([cls, x, y, w, t]) => add('text', { class: cls, x, y, textLength: w, lengthAdjust: 'spacingAndGlyphs' }, t));
  </script>
</body>
</html>
```
FILE: styles.css
```css
* {
  box-sizing: border-box;
}
body {
  margin: 0;
  width: 2878px;
  height: 1672px;
  overflow: hidden;
  position: relative;
  font-family: "Ubuntu", "Noto Sans", sans-serif;
  font-size: 26px;
  letter-spacing: 0.14px;
  color: #686a6c;
  background: #fff;
}
svg {
  display: block;
  flex: none;
  fill: currentColor;
}
.sprite {
  position: absolute;
  width: 0;
  height: 0;
}
.app {
  display: flex;
  height: 1672px;
}

/* sidebar */
.sidebar {
  width: 382px;
  flex: none;
  display: flex;
  flex-direction: column;
  border-right: 2px solid #e6e6e6;
}
.logo {
  height: 172px;
  border-bottom: 2px solid #e6e6e6;
}
.logo-text {
  font-family: "Ubuntu", "Open Sans", sans-serif;
  font-weight: 800;
  font-size: 57px;
  letter-spacing: 0;
  fill: #555;
  stroke: #555;
  stroke-width: 3;
  stroke-linejoin: round;
}
.client {
  height: 80px;
  display: flex;
  align-items: center;
  justify-content: center;
  padding: 0 4px 1px 0;
  background: #f9f9f9;
  border-bottom: 2px solid #e6e6e6;
}
.nav-label {
  height: 65px;
  padding: 22px 0 0 24px;
  font-size: 22px;
  font-weight: 500;
  line-height: 30px;
  color: #a8a8a8;
  -webkit-text-stroke: 0.5px #a8a8a8;
}
.nav-item {
  height: 64px;
  display: flex;
  align-items: center;
  gap: 26px;
  padding: 0 32px 0 24px;
}
.nav-item.active {
  color: #e2483f;
  padding-left: 18px;
  border-left: 6px solid #e2483f;
}
.nav-item.wide {
  gap: 28px;
}
.nav-item .bells {
  margin-right: -6px;
}
.nav-item .chev {
  margin-left: auto;
}
.nav-bottom {
  margin-top: auto;
  padding-bottom: 26px;
}
.collapse {
  height: 91px;
  display: flex;
  align-items: center;
  justify-content: flex-end;
  padding: 0 28px 6px 0;
  background: #f9f9f9;
  border-top: 2px solid #e6e6e6;
}

/* alert list */
.panel {
  width: 858px;
  flex: none;
  overflow: hidden;
}
.panel-head {
  height: 89px;
  display: flex;
  align-items: center;
  padding: 0 23px 1px 25px;
  border-bottom: 2px solid #eee;
}
.panel-head .plus {
  margin: 0 27px 0 auto;
}
.alert {
  display: flex;
  gap: 32px;
  padding: 28px 0 26px 31px;
  border-bottom: 2px solid #eee;
  white-space: nowrap;
}
.alert svg {
  margin-top: 2px;
  color: #e6e6e6;
}
.alert h3 {
  margin: 0 0 8px;
  font-size: 26px;
  font-weight: 600;
  line-height: 35px;
  letter-spacing: -0.35px;
}
.alert p {
  margin: 0;
  line-height: 37.6px;
  color: #929496;
}
.splitter {
  width: 8px;
  flex: none;
  background: #e8e8e8;
}

/* map */
.map {
  flex: 1;
  position: relative;
  overflow: hidden;
  background: #95c1f0;
}
.shelf {
  fill: #a1c9fa;
  stroke: #a1c9fa;
  stroke-width: 8;
  stroke-linejoin: round;
}
.land {
  fill: #f8faf7;
  stroke: #f8faf7;
  stroke-width: 3;
  stroke-linejoin: round;
}
.wood {
  fill: #e9f1e0;
  stroke: #e9f1e0;
  stroke-width: 4;
  stroke-linejoin: round;
}
.lake {
  fill: #a1c9fa;
}
.river {
  fill: none;
  stroke: #a6caf4;
  stroke-width: 1.500;
}
.border {
  fill: none;
  stroke: #bcbcc2;
  stroke-width: 1.800;
  stroke-linejoin: round;
}
.region {
  fill: none;
  stroke: #eaeae8;
  stroke-width: 2;
}
.map text {
  font-family: "Fira Sans", "Noto Sans", sans-serif;
  letter-spacing: 0;
}
.city, .town {
  fill: #333338;
}
.city {
  font-size: 28px;
}
.town {
  font-size: 24px;
}
.land-l, .land-s {
  fill: #92929a;
}
.land-l {
  font-size: 24px;
}
.land-s {
  font-size: 20px;
}
.area {
  font-size: 19px;
  fill: #b0b0b4;
}
.sea {
  font-size: 22px;
  font-style: italic;
  fill: #5a8cc8;
}
.map .sea {
  letter-spacing: 2px;
}
.capital {
  fill: #c04070;
}
.place {
  fill: #7a7a90;
}
.toolbar {
  position: absolute;
  top: 26px;
  right: 27px;
  width: 285px;
  height: 86px;
  display: flex;
  background: #fff;
  box-shadow: 0 4px 12px rgba(0, 0, 0, .35);
}
.tools {
  flex: 1;
  display: flex;
  align-items: center;
  justify-content: space-between;
  padding: 0 25px 4px 24px;
}
.menu {
  width: 71px;
  display: flex;
  align-items: center;
  justify-content: center;
  padding: 0 3px 4px 0;
  background: #f2f2f2;
  border-left: 2px solid #e8e8e8;
}
.copyright {
  position: absolute;
  right: 0;
  bottom: 0;
  width: 236px;
  height: 32px;
  padding-left: 10px;
  font-family: "Liberation Sans", sans-serif;
  font-size: 22px;
  line-height: 32px;
  letter-spacing: 0;
  white-space: nowrap;
  color: #333;
  background: rgba(255, 255, 255, .5);
}

.backdrop {
  position: absolute;
  inset: 0;
  background: rgba(0, 0, 0, .5);
}

/* wizard */
.modal {
  position: absolute;
  left: 938px;
  top: 58px;
  width: 1000px;
  height: 937px;
  display: flex;
  flex-direction: column;
  background: #fff;
  border: 2px solid #e4e4e4;
  box-shadow: 0 10px 30px rgba(0, 0, 0, .5);
}
.modal-head {
  height: 100px;
  display: flex;
  align-items: center;
  justify-content: space-between;
  padding: 0 29px 0 30px;
  border-bottom: 2px solid #f0f0f0;
}
.modal-body {
  flex: 1;
  display: flex;
  padding: 38px 0 0 56px;
}
.form {
  width: 755px;
  margin-left: 45px;
  display: flex;
  flex-direction: column;
}
.hint {
  margin: 0 0 38px;
  height: 40px;
  line-height: 40px;
  color: #a4a4a4;
}
.row {
  display: flex;
  margin-bottom: 26px;
}
.row label {
  width: 275px;
  line-height: 58px;
}
.field {
  width: 480px;
  height: 62px;
  display: flex;
  align-items: center;
  border: 2px solid #e4e4e4;
}
.cost .field {
  justify-content: space-between;
  padding: 0 26px 0 19px;
  color: #8a8a8a;
}
.cost svg {
  color: #686a6c;
}
.priority {
  height: 55px;
  margin-bottom: 31px;
}
.priority .field {
  height: 55px;
  justify-content: flex-end;
  padding: 0 12px 4px;
  border-radius: 10px;
  background: linear-gradient(#e4e4e4, #fff);
  box-shadow: inset 5px 0 5px -3px #bbb, inset -5px 0 5px -3px #bbb;
}
.event {
  margin-bottom: 35px;
}
.event .field {
  height: 68px;
  padding: 0 0 1px 26px;
}
.event b {
  margin-left: 6px;
  font-weight: 400;
  color: #2e7d1a;
}
.event b + b {
  margin-left: 12px;
}
.notify {
  margin-bottom: 13px;
}
.notify .field {
  height: 78px;
}
.btn {
  height: 61px;
  display: flex;
  align-items: center;
  justify-content: center;
  width: 134px;
  border-radius: 4px;
  background: #f1f1f1;
}
.btn.add {
  width: 130px;
  gap: 13px;
  align-self: flex-end;
}
.btn.next {
  width: 113px;
  color: #fff;
  background: #e2483f;
}
.modal-foot {
  height: 123px;
  display: flex;
  gap: 20px;
  justify-content: flex-end;
  padding: 30px 30px 0;
  background: #f9f9f9;
  border-top: 2px solid #e0e0e0;
}

/* numbered steps over the screen */
.arrow {
  position: absolute;
  left: 0;
  top: 0;
}
.step {
  position: absolute;
  width: 53px;
  height: 48px;
  border: 3px solid #ec4427;
  background: #fff;
  color: #ec4427;
  font: bold 32px/43px "Liberation Sans", sans-serif;
  text-align: center;
}
.step-1 {
  left: 180px;
  top: 389px;
}
.step-2 {
  left: 1079px;
  top: 10px;
}
.step-3 {
  left: 1134px;
  top: 86px;
}
```
